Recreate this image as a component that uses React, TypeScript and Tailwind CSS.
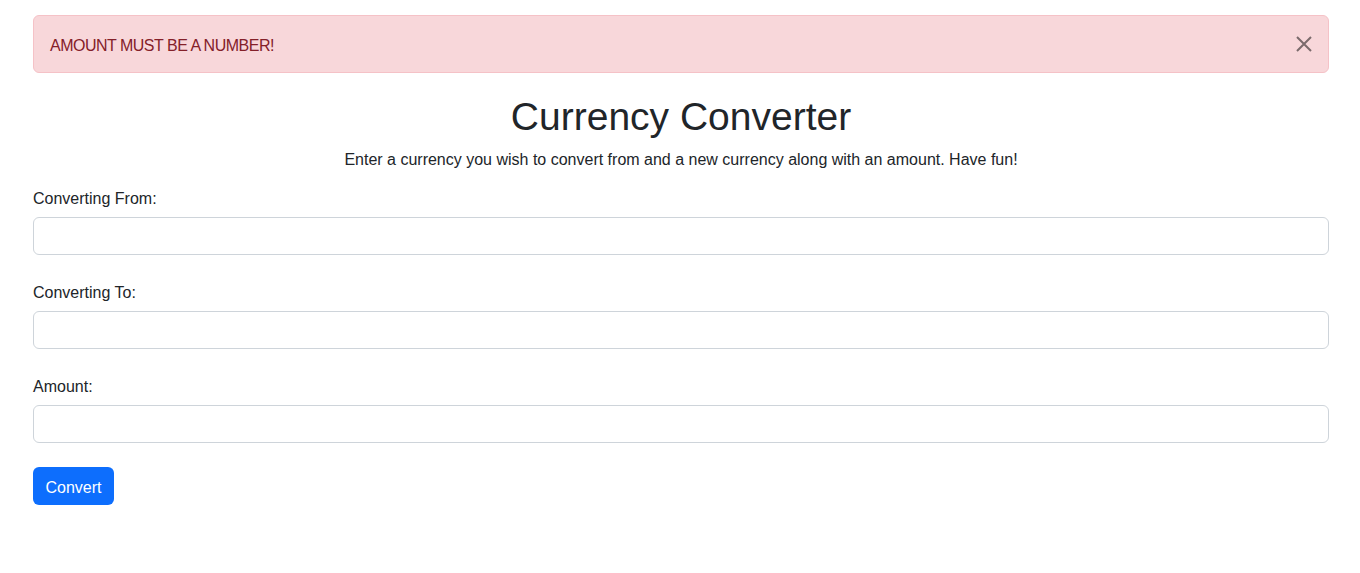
const Field = ({ label }: { label: string }): JSX.Element => {
  return (
    <div className="mb-6">
      <label className="mb-1.5 block pt-0.5 text-base leading-6">{label}</label>
      <input
        type="text"
        className="block h-[38px] w-full rounded-md border border-[#ced4da] bg-white px-3 py-1.5 text-base outline-none"
      />
    </div>
  );
};

const App = (): JSX.Element => {
  return (
    <div
      className="min-h-screen bg-white text-[#212529]"
      style={{ fontFamily: '"Liberation Sans", Arial, sans-serif' }}
    >
      <div className="mx-auto max-w-[1320px] pl-[13px] pr-[11px]">
        <div className="relative mt-[15px] mb-4 rounded-md border border-[#f5c2c7] bg-[#f8d7da] pt-[18px] pb-[14px] pl-4 pr-12 text-base leading-6 tracking-[-0.5px] text-[#842029]">
          AMOUNT MUST BE A NUMBER!
          <button
            type="button"
            aria-label="Close"
            className="absolute top-0 right-0 box-content h-4 w-4 px-4 py-5 opacity-50"
          >
            <svg viewBox="0 0 16 16" className="h-4 w-4" fill="none">
              <path d="M1 1L15 15M15 1L1 15" stroke="#000" strokeWidth="2" />
            </svg>
          </button>
        </div>

        <h1 className="mb-1 pt-1 text-center text-[39px] leading-[48px] font-normal">
          Currency Converter
        </h1>
        <p className="mb-[13px] pt-[3px] text-center text-base leading-6">
          Enter a currency you wish to convert from and a new currency along with an amount. Have fun!
        </p>

        <form>
          <Field label="Converting From:" />
          <Field label="Converting To:" />
          <Field label="Amount:" />
          <button
            type="button"
            className="h-[38px] w-[81px] rounded-md bg-[#0d6efd] pt-[3px] text-base leading-6 text-white"
          >
            Convert
          </button>
        </form>
      </div>
    </div>
  );
};

export default App;
